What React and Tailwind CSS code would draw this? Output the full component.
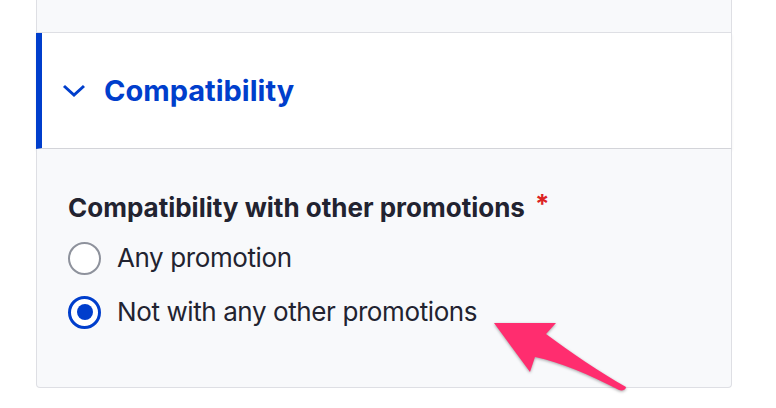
export default function App() {
  const options = [
    { label: "Any promotion", checked: false },
    { label: "Not with any other promotions", checked: true },
  ];

  return (
    <div
      className="relative w-[776px] h-[408px] bg-white overflow-hidden text-[#222330]"
      style={{ fontFamily: "Inter, 'Noto Sans', sans-serif" }}
    >
      <div className="ml-[36px] w-[696px]">
        {/* previous section bottom */}
        <div className="h-[33px] bg-[#f8f9fb] border-x border-b border-[#dedfe4]" />

        {/* details summary */}
        <div className="h-[116px] bg-white border-l-[6px] border-l-[#003ecc] border-r border-r-[#dedfe4] border-b border-b-[#d3d4d9] shadow-[0_2px_3px_rgba(0,0,0,0.06)] flex items-center pl-[20px] gap-[18px]">
          <svg width="24" height="14" viewBox="0 0 24 14" fill="none">
            <path d="M2 2 L12 11 L22 2" stroke="#003ecc" strokeWidth="3" />
          </svg>
          <span className="text-[29px] font-bold text-[#003ecc]">
            Compatibility
          </span>
        </div>

        {/* details content */}
        <div className="h-[239px] bg-[#f8f9fb] border-x border-b border-[#dedfe4] rounded-b-[4px] pl-[31px] pt-[44px]">
          <div className="flex items-start gap-[10px] text-[26px] font-bold leading-[30px]">
            <span>Compatibility with other promotions</span>
            <span className="text-[#dc2323] text-[26px] leading-[22px]">*</span>
          </div>
          <div className="mt-[18px] flex flex-col gap-[20px]">
            {options.map((opt) => (
              <label
                key={opt.label}
                className="flex items-center gap-[16px] text-[26px] leading-[34px] tracking-[-0.4px]"
              >
                {opt.checked ? (
                  <span className="w-[33px] h-[33px] rounded-full border-[3px] border-[#003ecc] bg-white flex items-center justify-center">
                    <span className="w-[16px] h-[16px] rounded-full bg-[#003ecc]" />
                  </span>
                ) : (
                  <span className="w-[33px] h-[33px] rounded-full border-2 border-[#8e929c] bg-white" />
                )}
                <span>{opt.label}</span>
              </label>
            ))}
          </div>
        </div>
      </div>

      {/* annotation arrow */}
      <svg
        className="absolute left-0 top-0 pointer-events-none"
        width="776"
        height="408"
        viewBox="0 0 776 408"
        style={{ filter: "drop-shadow(0 1px 1.5px rgba(0,0,0,0.35))" }}
      >
        <path
          d="M494 323 L556 323 L546 334 C570 352 600 372 626 387 C626 390 622 391 619 390 C590 375 560 362 535 357 L530 372 Z"
          fill="#ff2d6f"
        />
      </svg>
    </div>
  );
}
